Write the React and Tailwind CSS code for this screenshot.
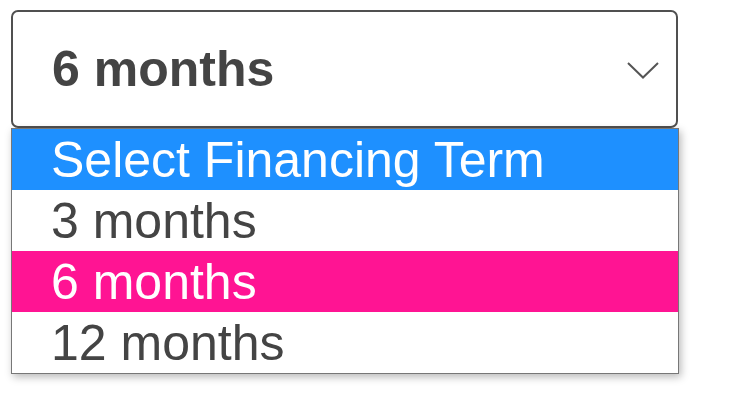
export default function App() {
  const options = [
    { label: "Select Financing Term", cls: "bg-[#1e90ff] text-white" },
    { label: "3 months", cls: "bg-white text-[#444]" },
    { label: "6 months", cls: "bg-[#ff1493] text-white" },
    { label: "12 months", cls: "bg-white text-[#444]" },
  ];
  return (
    <div className="w-[745px] h-[418px] bg-white pt-[10px] pl-[11px]" style={{ fontFamily: '"Liberation Sans", Arial, sans-serif' }}>
      <div className="w-[667px]">
        <div className="h-[118px] border-2 border-[#505050] rounded-[7px] flex items-center justify-between pl-[39px] pr-[17px]">
          <span className="text-[50px] font-bold text-[#444] leading-none">6 months</span>
          <svg width="32" height="17" viewBox="0 0 32 17" className="mt-[3px]">
            <path d="M1 1 L16 15.5 L31 1" fill="none" stroke="#555" strokeWidth="2" />
          </svg>
        </div>
        <div className="w-[668px] border border-[#777] shadow-[2px_3px_8px_rgba(0,0,0,0.28)] bg-white">
          {options.map((o) => (
            <div key={o.label} className={`h-[61px] flex items-center pl-[39px] text-[50px] leading-none ${o.cls}`}>
              {o.label}
            </div>
          ))}
        </div>
      </div>
    </div>
  );
}
